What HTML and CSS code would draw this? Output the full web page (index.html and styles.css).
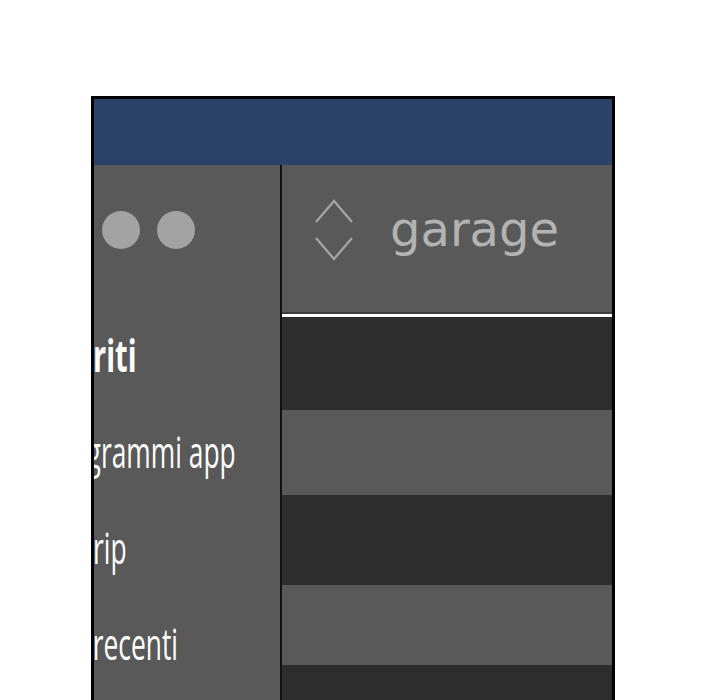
FILE: index.html
```html
<!DOCTYPE html>
<html lang="it">
<head>
<meta charset="utf-8">
<title>Finder</title>
<link rel="stylesheet" href="styles.css">
</head>
<body>
<div class="window">
  <div class="titlebar"></div>
  <div class="main">
    <aside class="sidebar">
      <div class="side-inner">
        <div class="lights">
          <span class="dot"></span>
          <span class="dot"></span>
          <span class="dot"></span>
        </div>
        <div class="side-head"><span class="label head-label">Preferiti</span></div>
        <div class="side-item"><span class="label">Programmi app</span></div>
        <div class="side-item"><span class="label">Andrip</span></div>
        <div class="side-item"><span class="label">File recenti</span></div>
      </div>
    </aside>
    <div class="divider"></div>
    <section class="content">
      <div class="pathbar">
        <svg class="chev" viewBox="0 0 40 64" width="40" height="64" aria-hidden="true">
          <polyline points="2,24 20,3 38,24" />
          <polyline points="2,40 20,61 38,40" />
        </svg>
        <span class="folder">garage</span>
      </div>
      <div class="rule"></div>
      <div class="row row-dark r1"></div>
      <div class="row row-light r2"></div>
      <div class="row row-dark r3"></div>
      <div class="row row-light r4"></div>
      <div class="row row-dark r5"></div>
    </section>
  </div>
</div>
</body>
</html>
```
FILE: styles.css
```css
html, body {
  margin: 0;
  padding: 0;
  background: #ffffff;
  height: 700px;
  overflow: hidden;
}

.window {
  margin: 96px 0 0 91px;
  width: 518px;
  border: 3px solid #000000;
  border-bottom: none;
  background: #000000;
}

.titlebar {
  height: 66px;
  background: #2b4369;
}

.main {
  display: flex;
  height: 540px;
}

.sidebar {
  width: 186px;
  flex: none;
  background: #595959;
  overflow: hidden;
}

.side-inner {
  margin-left: -72px;
  width: 400px;
}

.lights {
  display: flex;
  gap: 17px;
  height: 142px;
  padding: 46px 0 0 25px;
  box-sizing: border-box;
}

.dot {
  width: 38px;
  height: 38px;
  border-radius: 50%;
  background: #a3a3a3;
}

.side-head,
.side-item {
  height: 96px;
  line-height: 96px;
  font-family: "Open Sans", "Liberation Sans", sans-serif;
  font-size: 44px;
  color: #ffffff;
  white-space: nowrap;
}

.side-head {
  font-weight: 700;
  margin-left: -6px;
}

.side-item {
  padding-left: 22px;
}

.label {
  display: inline-block;
  transform: scaleX(0.6);
  transform-origin: left center;
}

.head-label {
  transform: scaleX(0.66);
}

.divider {
  width: 2px;
  flex: none;
  background: #111111;
}

.content {
  width: 330px;
  flex: none;
  background: #2d2d2d;
}

.pathbar {
  height: 147px;
  box-sizing: border-box;
  padding: 0 0 17px 32px;
  background: #595959;
  display: flex;
  align-items: center;
  gap: 36px;
}

.chev {
  flex: none;
  fill: none;
  stroke: #a6a6a6;
  stroke-width: 2.2;
}

.folder {
  font-family: "DejaVu Sans", sans-serif;
  font-size: 48px;
  line-height: 1.164;
  color: #b3b3b3;
}

.rule {
  height: 3px;
  background: #ffffff;
  border-top: 2px solid #3d3d3d;
}

.row-dark { background: #2d2d2d; }
.row-light { background: #595959; }
.r1 { height: 93px; }
.r2 { height: 85px; }
.r3 { height: 90px; }
.r4 { height: 80px; }
.r5 { height: 60px; }
```
